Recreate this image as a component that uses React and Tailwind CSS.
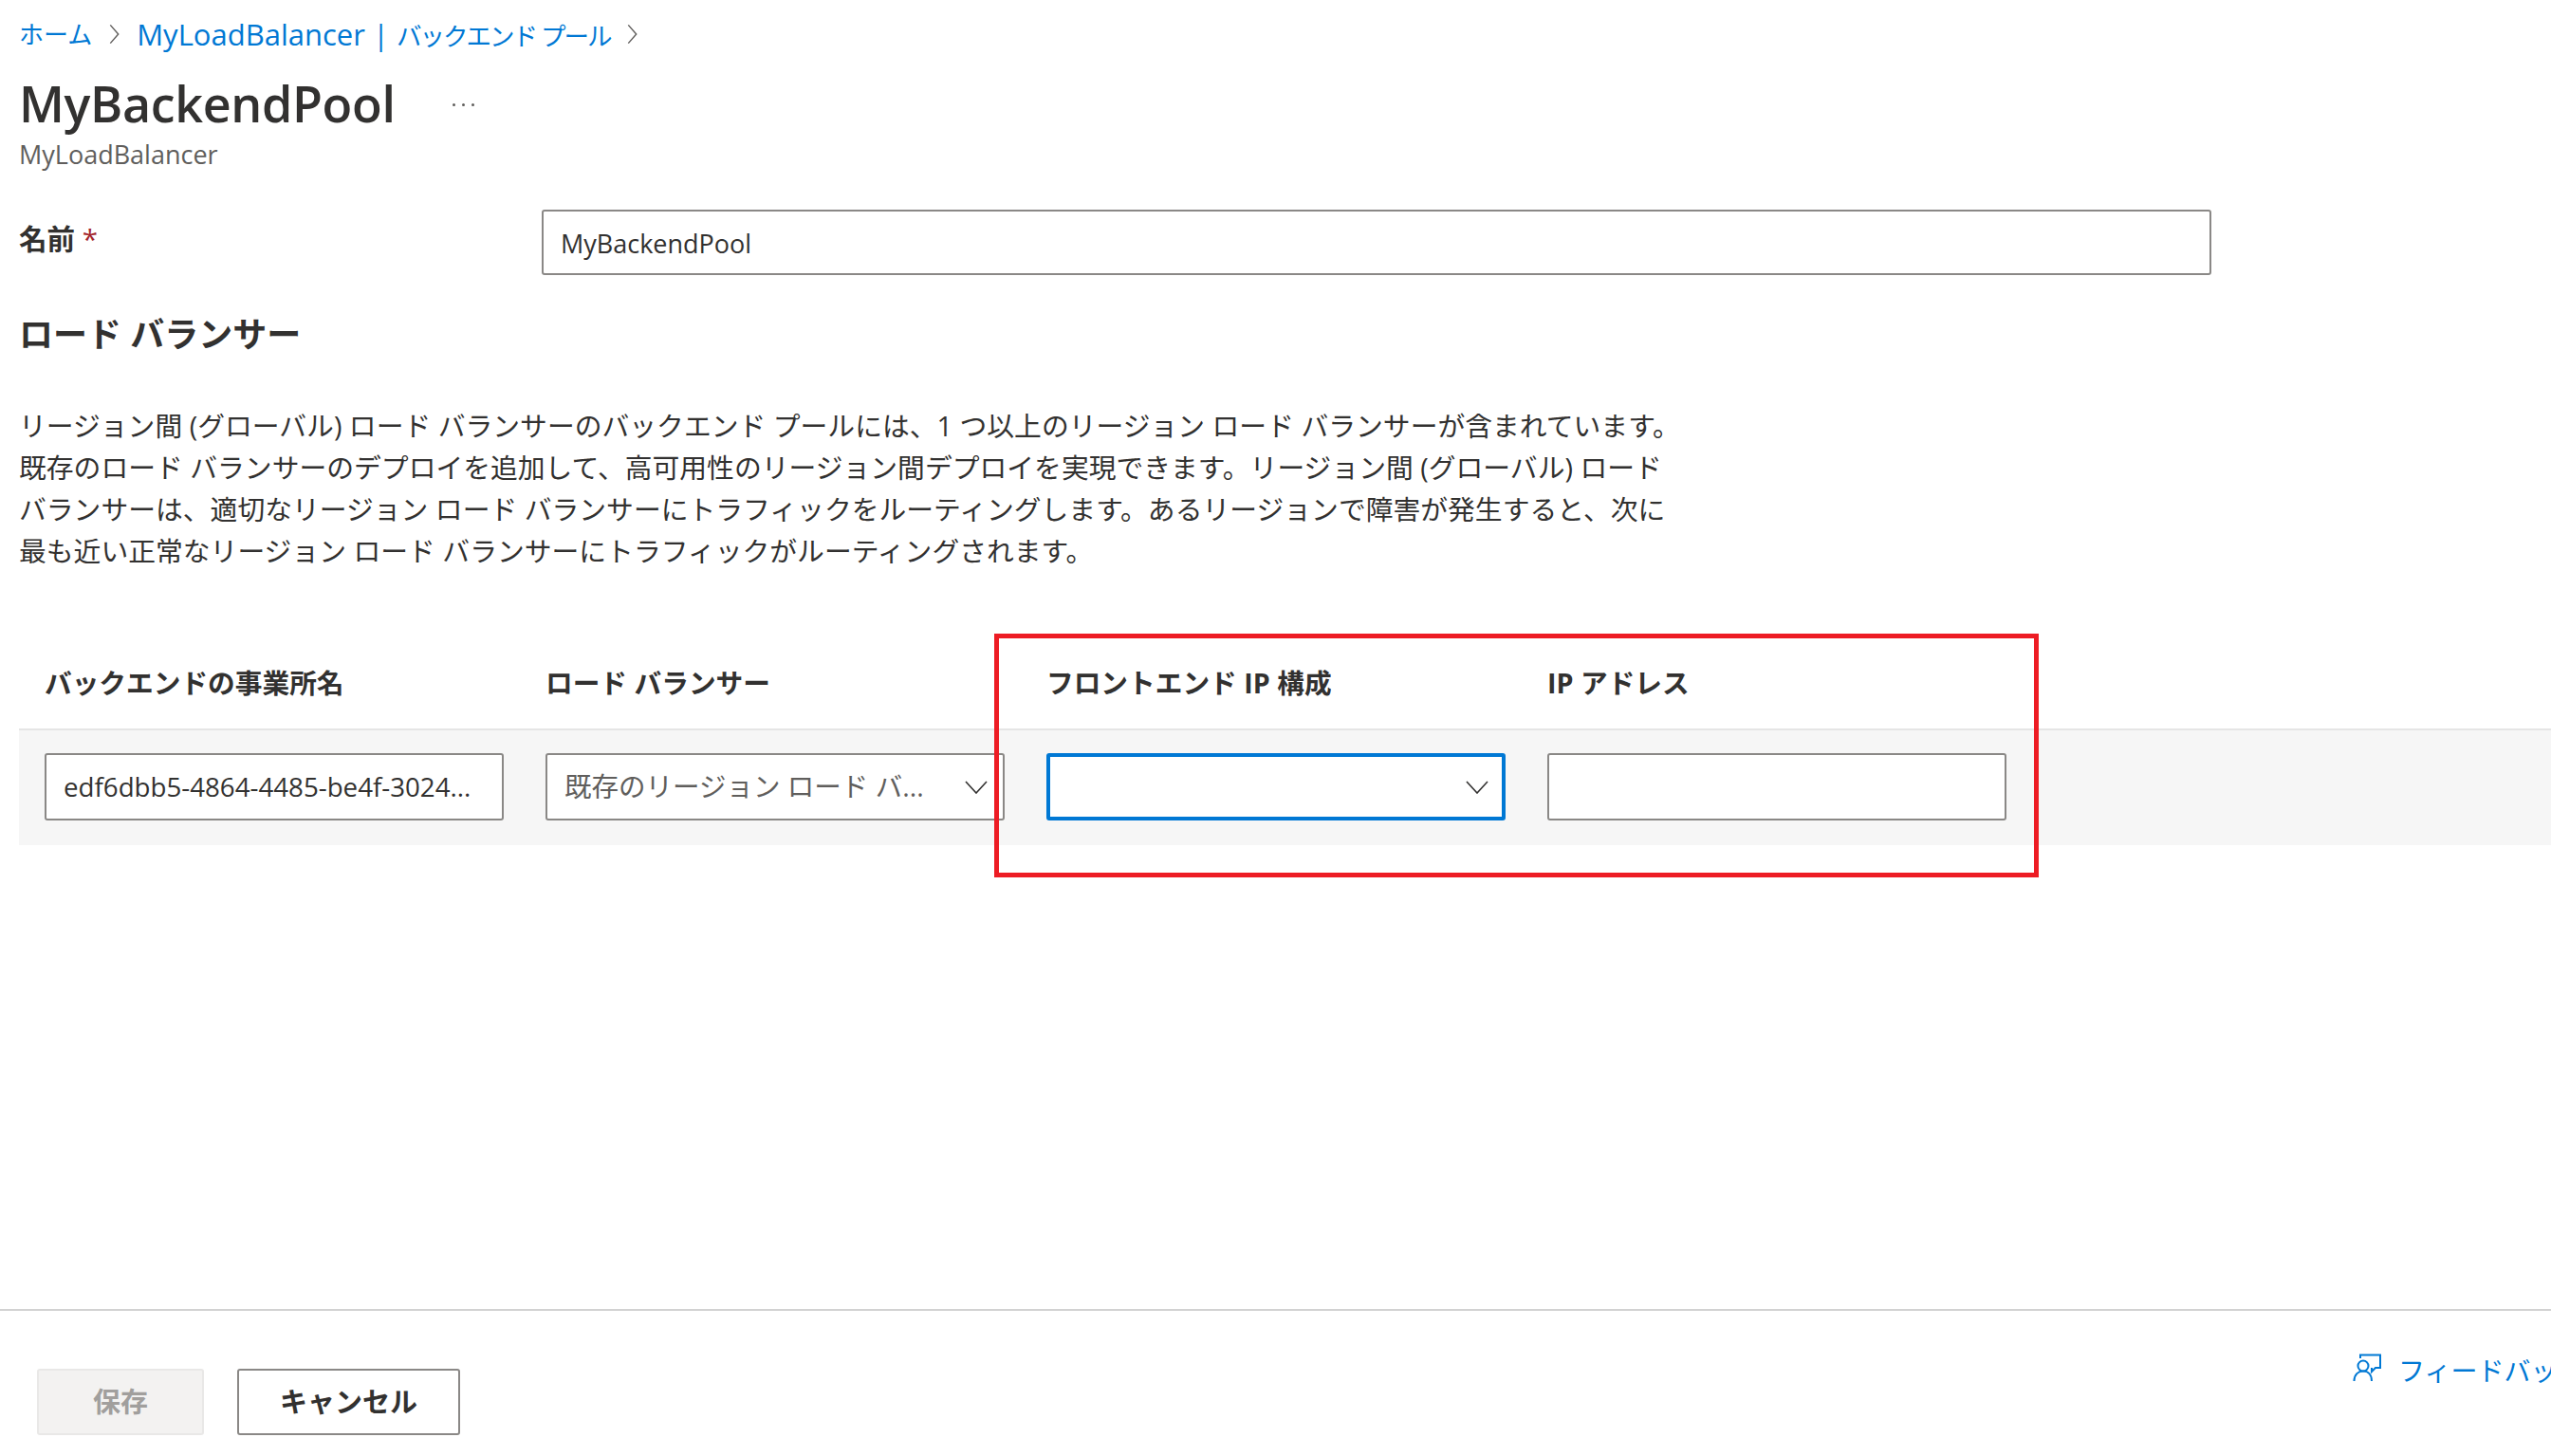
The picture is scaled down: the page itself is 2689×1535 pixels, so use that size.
import React from "react";

const FONT = "[font-family:'Open_Sans','Noto_Sans_CJK_JP',sans-serif]";

function Chevron({ className }) {
  return (
    <svg viewBox="0 0 24 14" className={className} fill="none" stroke="#323130" strokeWidth="1.6">
      <path d="M1 1 L12 13 L23 1" />
    </svg>
  );
}

function Crumb() {
  return (
    <svg viewBox="0 0 10 20" className="w-[13px] h-[24px]" fill="none" stroke="#605e5c" strokeWidth="1.2">
      <path d="M1.5 2 L8.5 10 L1.5 18" />
    </svg>
  );
}

function Field({ children, focus, chevron, muted }) {
  return (
    <div
      className={`relative flex items-center w-[484px] h-[71px] rounded-[3px] bg-white ${
        focus ? "border-[4px] border-[#0078d4] pl-[16px] pr-[14px]" : "border-2 border-[#8a8886] pl-[18px] pr-[16px]"
      } ${muted ? "text-[#605e5c] text-[28.5px]" : "text-[#323130] text-[27.7px]"}`}
    >
      <span className="flex-1 whitespace-nowrap overflow-hidden">{children}</span>
      {chevron && <Chevron className="w-[24px] h-[14px] shrink-0" />}
    </div>
  );
}

export default function App() {
  return (
    <div className={`relative flex flex-col h-[1535px] w-[2689px] overflow-hidden bg-white text-[#323130] ${FONT}`}>
      <main className="flex-1 pl-[20px]">
        <nav className="flex items-center h-[36px] mt-[18px] gap-[17px] text-[26px] leading-none text-[#0078d4]">
          <span>ホーム</span>
          <Crumb />
          <span className="text-[31px]">
            MyLoadBalancer | <span className="text-[26.5px] tracking-[-2px]">バックエンド プール</span>
          </span>
          <Crumb />
        </nav>

        <div className="flex items-center mt-[26px] h-[60px]">
          <h1 className="text-[52px] font-semibold leading-none tracking-[-0.35px] mb-[2px]">MyBackendPool</h1>
          <div className="flex gap-[7px] ml-[60px]">
            <span className="w-[3px] h-[3px] rounded-full bg-[#605e5c]" />
            <span className="w-[3px] h-[3px] rounded-full bg-[#605e5c]" />
            <span className="w-[3px] h-[3px] rounded-full bg-[#605e5c]" />
          </div>
        </div>
        <div className="mt-[6px] text-[27px] leading-[34px] text-[#605e5c]">MyLoadBalancer</div>

        <div className="flex items-start mt-[41px]">
          <label className="w-[551px] pt-[12px] text-[29.5px] leading-[38px] font-bold">
            名前 <span className="text-[#a4262c] font-normal">*</span>
          </label>
          <div className="flex items-center w-[1760px] h-[69px] rounded-[3px] border-2 border-[#8a8886] bg-white pl-[18px] pt-[3px] text-[27px]">
            MyBackendPool
          </div>
        </div>

        <h2 className="mt-[42px] text-[36px] leading-[42px] font-bold">ロード バランサー</h2>

        <p className="mt-[53px] w-[1780px] text-[28.8px] leading-[44px]">
          リージョン間 (グローバル) ロード バランサーのバックエンド プールには、1 つ以上のリージョン ロード バランサーが含まれています。
          <br />
          既存のロード バランサーのデプロイを追加して、高可用性のリージョン間デプロイを実現できます。リージョン間 (グローバル) ロード
          <br />
          バランサーは、適切なリージョン ロード バランサーにトラフィックをルーティングします。あるリージョンで障害が発生すると、次に
          <br />
          最も近い正常なリージョン ロード バランサーにトラフィックがルーティングされます。
        </p>

        <div className="mt-[95px]">
          <div className="flex gap-[44px] pl-[27px] h-[72px] items-start border-b-2 border-[#e5e5e5] text-[28.7px] leading-[44px] font-bold">
            <div className="w-[484px]">バックエンドの事業所名</div>
            <div className="w-[484px]">ロード バランサー</div>
            <div className="w-[484px]">フロントエンド IP 構成</div>
            <div className="w-[484px]">IP アドレス</div>
          </div>
          <div className="flex gap-[44px] pl-[27px] pt-[24px] h-[121px] items-start bg-[#f6f6f6]">
            <Field>edf6dbb5-4864-4485-be4f-3024...</Field>
            <Field chevron muted>既存のリージョン ロード バ...</Field>
            <Field chevron focus />
            <Field />
          </div>
        </div>
      </main>

      <footer className="relative flex items-start h-[155px] border-t-2 border-[#d2d2d2] pl-[39px] pt-[61px]">
        <button className="w-[176px] h-[70px] rounded-[3px] border-2 border-[#e9e8e7] bg-[#f3f2f1] text-[#a19f9d] text-[29px] font-bold">
          保存
        </button>
        <button className="ml-[35px] w-[235px] h-[70px] rounded-[3px] border-2 border-[#8a8886] bg-white text-[#323130] text-[29px] font-bold">
          キャンセル
        </button>
        <div className="ml-auto flex items-start gap-[18px] mt-[-16px] w-[209px] shrink-0 whitespace-nowrap text-[28px] leading-[36px] text-[#0078d4]">
          <svg viewBox="0 0 30 30" className="w-[30px] h-[30px] shrink-0" fill="none" stroke="#0078d4" strokeWidth="2">
            <path d="M8 5 V1.5 H29 V15 H24 L20 19 V15" />
            <circle cx="11" cy="13" r="5.5" />
            <path d="M1.5 29 C1.5 22 6 18.5 11 18.5 C16 18.5 20 22 20 29" />
          </svg>
          <span>フィードバック</span>
        </div>
      </footer>

      <div className="absolute left-[1048px] top-[668px] w-[1101px] h-[257px] border-[5px] border-[#ed1c24]" />
    </div>
  );
}
